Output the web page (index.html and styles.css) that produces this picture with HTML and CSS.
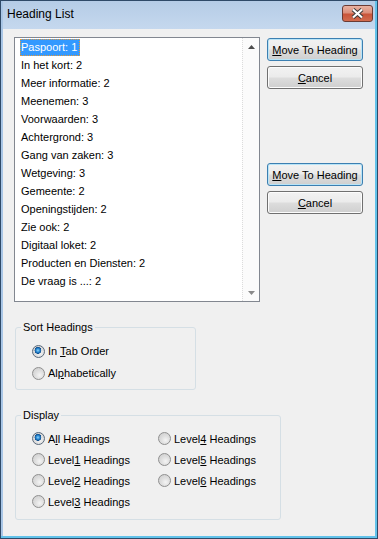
FILE: index.html
```html
<!DOCTYPE html>
<html lang="en">
<head>
<meta charset="UTF-8">
<title>Heading List</title>
<link rel="stylesheet" href="styles.css">
</head>
<body>
<div class="window">
    <div class="titlebar">
        <span class="title">Heading List</span>
        <span class="close">
            <svg width="29" height="15" viewBox="0 0 29 15">
                <path d="M10 3.5 L19 11.5 M19 3.5 L10 11.5" stroke="#3b3b3b" stroke-width="4.2" fill="none"/>
                <path d="M10 3.5 L19 11.5 M19 3.5 L10 11.5" stroke="#ffffff" stroke-width="2.2" fill="none"/>
            </svg>
        </span>
    </div>
    <div class="client">
        <div class="top">
            <div class="listbox">
                <div class="items">
                    <div class="item"><span class="selected">Paspoort: 1</span></div>
                    <div class="item"><span>In het kort: 2</span></div>
                    <div class="item"><span>Meer informatie: 2</span></div>
                    <div class="item"><span>Meenemen: 3</span></div>
                    <div class="item"><span>Voorwaarden: 3</span></div>
                    <div class="item"><span>Achtergrond: 3</span></div>
                    <div class="item"><span>Gang van zaken: 3</span></div>
                    <div class="item"><span>Wetgeving: 3</span></div>
                    <div class="item"><span>Gemeente: 2</span></div>
                    <div class="item"><span>Openingstijden: 2</span></div>
                    <div class="item"><span>Zie ook: 2</span></div>
                    <div class="item"><span>Digitaal loket: 2</span></div>
                    <div class="item"><span>Producten en Diensten: 2</span></div>
                    <div class="item"><span>De vraag is ...: 2</span></div>
                </div>
                <div class="scrollbar">
                    <div class="arrow">
                        <svg width="7" height="4" viewBox="0 0 7 4"><path d="M0 4 L3.5 0 L7 4 Z" fill="#4d4d4d"/></svg>
                    </div>
                    <div class="track"></div>
                    <div class="arrow">
                        <svg width="7" height="4" viewBox="0 0 7 4"><path d="M0 0 L7 0 L3.5 4 Z" fill="#8a8a8a"/></svg>
                    </div>
                </div>
            </div>
            <div class="buttons">
                <div class="btn-group">
                    <button class="btn default"><u>M</u>ove To Heading</button>
                    <button class="btn"><u>C</u>ancel</button>
                </div>
                <div class="btn-group second">
                    <button class="btn default"><u>M</u>ove To Heading</button>
                    <button class="btn"><u>C</u>ancel</button>
                </div>
            </div>
        </div>

        <fieldset class="group sort">
            <legend>Sort Headings</legend>
            <div class="radios">
                <label class="option"><span class="radio checked"></span><span>In <u>T</u>ab Order</span></label>
                <label class="option"><span class="radio"></span><span>Al<u>p</u>habetically</span></label>
            </div>
        </fieldset>

        <fieldset class="group display">
            <legend>Display</legend>
            <div class="radios grid">
                <label class="option"><span class="radio checked"></span><span>A<u>l</u>l Headings</span></label>
                <label class="option"><span class="radio"></span><span>Level<u>1</u> Headings</span></label>
                <label class="option"><span class="radio"></span><span>Level<u>2</u> Headings</span></label>
                <label class="option"><span class="radio"></span><span>Level<u>3</u> Headings</span></label>
                <label class="option"><span class="radio"></span><span>Level<u>4</u> Headings</span></label>
                <label class="option"><span class="radio"></span><span>Level<u>5</u> Headings</span></label>
                <label class="option"><span class="radio"></span><span>Level<u>6</u> Headings</span></label>
            </div>
        </fieldset>
    </div>
</div>
</body>
</html>
```

FILE: styles.css
```css
body, html {
    margin: 0;
    padding: 0;
    font-family: "Liberation Sans", Arial, sans-serif;
    font-size: 11px;
    color: #000;
}
.window {
    width: 378px;
    height: 539px;
    box-sizing: border-box;
    border: 1px solid #2f4a68;
    background: #a9c6e6;
    padding: 0 2px 2px 2px;
    display: flex;
    flex-direction: column;
    box-shadow: inset -2px -2px 0 #62c2ea;
}
.titlebar {
    height: 28px;
    flex: none;
    display: flex;
    justify-content: space-between;
    align-items: flex-start;
    padding: 4px 2px 0 4px;
    box-sizing: border-box;
    background: linear-gradient(#b5cce6, #c5d8ee);
}
.title {
    font-size: 12px;
    line-height: 12px;
    margin-top: 3px;
    color: #000;
}
.close {
    width: 31px;
    height: 17px;
    box-sizing: border-box;
    border: 1px solid #6b3b34;
    border-radius: 3px;
    background: linear-gradient(#e9b2a2 0%, #dc8f7b 45%, #c9553a 55%, #d26c4f 100%);
    display: flex;
    align-items: center;
    justify-content: center;
}
.client {
    flex: 1;
    background: #f0f0f0;
    padding: 8px 0 0 11px;
}
.top {
    display: flex;
    gap: 7px;
}
.listbox {
    width: 246px;
    height: 265px;
    box-sizing: border-box;
    border: 1px solid #828790;
    background: #fff;
    display: flex;
}
.items {
    flex: 1;
    padding: 1px 0 0 5px;
    overflow: hidden;
}
.item {
    height: 18px;
}
.item span {
    display: inline-block;
    line-height: 15px;
    border: 1px dotted transparent;
    padding: 0;
    white-space: nowrap;
}
.item .selected {
    background: #3399ff;
    color: #fff;
    border-color: #e59a3c;
    padding-right: 2px;
}
.scrollbar {
    width: 17px;
    display: flex;
    flex-direction: column;
    background: #fbfbfb;
    border-left: 1px dotted #dcdcdc;
    box-sizing: border-box;
}
.arrow {
    height: 17px;
    display: flex;
    align-items: center;
    justify-content: center;
}
.track {
    flex: 1;
}
.buttons {
    margin-top: 1px;
}
.btn-group {
    display: flex;
    flex-direction: column;
    gap: 5px;
}
.btn-group.second {
    margin-top: 74px;
}
.btn {
    width: 96px;
    height: 23px;
    box-sizing: border-box;
    border: 1px solid #707070;
    border-radius: 3px;
    background: linear-gradient(#f2f2f2 0%, #ebebeb 49%, #dddddd 51%, #cfcfcf 100%);
    font-family: "Liberation Sans", Arial, sans-serif;
    font-size: 11px;
    color: #000;
    padding: 0;
    box-shadow: inset 0 0 0 1px #fcfcfc;
}
.btn.default {
    border-color: #3c7fb1;
    box-shadow: inset 0 0 0 1px #b8e4f7;
}
.group {
    border: 1px solid #d5dfe5;
    border-radius: 3px;
    margin: 0;
    padding: 6px 0 0 16px;
    box-sizing: border-box;
    min-width: 0;
}
.group legend {
    padding: 0 2px;
    margin-left: -11px;
    line-height: 14px;
}
.sort {
    width: 181px;
    height: 70px;
    margin-top: 18px;
    margin-left: 1px;
}
.display {
    width: 266px;
    height: 112px;
    margin-top: 18px;
    margin-left: 1px;
}
.radios {
    display: flex;
    flex-direction: column;
}
.sort .option {
    height: 22px;
}
.radios.grid {
    display: grid;
    grid-template-columns: 126px auto;
    grid-template-rows: repeat(4, 21px);
    grid-auto-flow: column;
}
.option {
    display: flex;
    align-items: center;
    gap: 3px;
    white-space: nowrap;
}
.radio {
    width: 13px;
    height: 13px;
    box-sizing: border-box;
    border-radius: 50%;
    border: 1px solid #8f8f8f;
    background: radial-gradient(circle at 60% 65%, #f4f4f4 0%, #dedede 45%, #cbcbcb 100%);
    flex: none;
}
.radio.checked {
    border-color: #5a6a7c;
    background:
        radial-gradient(circle at 45% 40%, #8fd6fb 0, #2a8ad4 1.8px, #0f4f8f 3.2px, transparent 3.6px),
        radial-gradient(circle at 60% 65%, #f4f4f4 0%, #dedede 45%, #cbcbcb 100%);
}
```
